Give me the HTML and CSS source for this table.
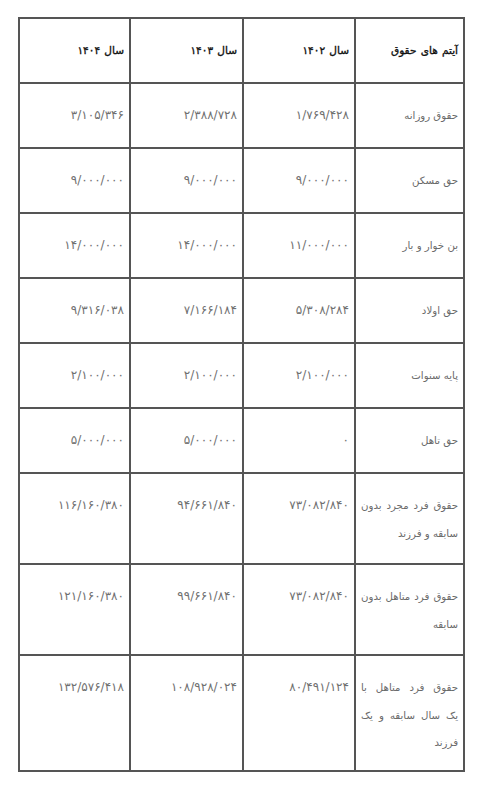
FILE: index.html
```html
<!DOCTYPE html>
<html lang="fa" dir="rtl">
<head>
<meta charset="utf-8">
<title>جدول حقوق</title>
<link rel="stylesheet" href="styles.css">
</head>
<body>
<div class="page">
<table class="salary">
<colgroup>
<col class="c-item"><col class="c-y1"><col class="c-y2"><col class="c-y3">
</colgroup>
<thead>
<tr class="r1">
<th>آیتم های حقوق</th>
<th>سال ۱۴۰۲</th>
<th>سال ۱۴۰۳</th>
<th>سال ۱۴۰۴</th>
</tr>
</thead>
<tbody>
<tr class="r1"><td>حقوق روزانه</td><td class="num">۱/۷۶۹/۴۲۸</td><td class="num">۲/۳۸۸/۷۲۸</td><td class="num">۳/۱۰۵/۳۴۶</td></tr>
<tr class="r1"><td>حق مسکن</td><td class="num">۹/۰۰۰/۰۰۰</td><td class="num">۹/۰۰۰/۰۰۰</td><td class="num">۹/۰۰۰/۰۰۰</td></tr>
<tr class="r1"><td>بن خوار و بار</td><td class="num">۱۱/۰۰۰/۰۰۰</td><td class="num">۱۴/۰۰۰/۰۰۰</td><td class="num">۱۴/۰۰۰/۰۰۰</td></tr>
<tr class="r1"><td>حق اولاد</td><td class="num">۵/۳۰۸/۲۸۴</td><td class="num">۷/۱۶۶/۱۸۴</td><td class="num">۹/۳۱۶/۰۳۸</td></tr>
<tr class="r1"><td>پایه سنوات</td><td class="num">۲/۱۰۰/۰۰۰</td><td class="num">۲/۱۰۰/۰۰۰</td><td class="num">۲/۱۰۰/۰۰۰</td></tr>
<tr class="r1"><td>حق تاهل</td><td class="num">۰</td><td class="num">۵/۰۰۰/۰۰۰</td><td class="num">۵/۰۰۰/۰۰۰</td></tr>
<tr class="r2"><td><span class="ln">حقوق فرد مجرد بدون</span> <span class="ln end">سابقه و فرزند</span></td><td class="num">۷۳/۰۸۲/۸۴۰</td><td class="num">۹۴/۶۶۱/۸۴۰</td><td class="num">۱۱۶/۱۶۰/۳۸۰</td></tr>
<tr class="r2"><td><span class="ln">حقوق فرد متاهل بدون</span> <span class="ln end">سابقه</span></td><td class="num">۷۳/۰۸۲/۸۴۰</td><td class="num">۹۹/۶۶۱/۸۴۰</td><td class="num">۱۲۱/۱۶۰/۳۸۰</td></tr>
<tr class="r3"><td><span class="ln">حقوق فرد متاهل با</span> <span class="ln">یک سال سابقه و یک</span> <span class="ln end">فرزند</span></td><td class="num">۸۰/۴۹۱/۱۲۴</td><td class="num">۱۰۸/۹۲۸/۰۲۴</td><td class="num">۱۳۲/۵۷۶/۴۱۸</td></tr>
</tbody>
</table>
</div>
</body>
</html>
```
FILE: styles.css
```css
html, body {
  margin: 0;
  padding: 0;
  background: #ffffff;
}
.page {
  width: 496px;
  padding-top: 17px;
  display: flex;
  justify-content: flex-start;
}
.salary {
  margin-right: 31px;
  border-collapse: collapse;
  table-layout: fixed;
  width: 445px;
  font-family: "DejaVu Sans", sans-serif;
}
.c-item { width: 109px; }
.c-y1 { width: 112px; }
.c-y2 { width: 113px; }
.c-y3 { width: 111px; }
.salary th, .salary td {
  border: 2px solid #555;
  vertical-align: top;
  text-align: right;
  padding: 18px 5px 0 5px;
  line-height: 27.5px;
  box-sizing: border-box;
}
.salary th {
  font-size: 10.5px;
  font-weight: normal;
  color: #111;
  -webkit-text-stroke: 0.35px #111;
  word-spacing: 1px;
}
.salary td {
  font-size: 10.2px;
  font-weight: normal;
  color: #6a6a6a;
}
.salary td.num {
  font-size: 12px;
  letter-spacing: 1px;
  color: #707070;
}
.ln {
  display: block;
  white-space: nowrap;
  text-align: justify;
  text-align-last: justify;
}
.ln.end {
  text-align-last: right;
}
.r1 { height: 65px; }
.r2 { height: 91px; }
.r3 { height: 116px; }
```
